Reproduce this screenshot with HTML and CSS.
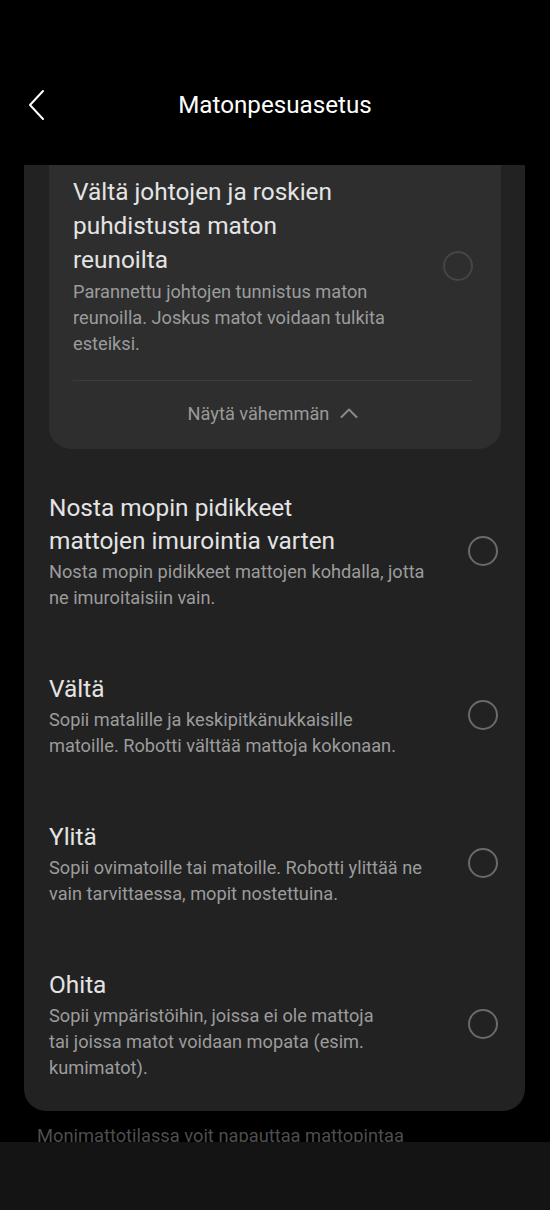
FILE: index.html
```html
<!DOCTYPE html>
<html lang="fi">
<head>
<meta charset="utf-8">
<link rel="stylesheet" href="styles.css">
</head>
<body>
<div class="screen">
  <header class="topbar">
    <button class="back" aria-label="Takaisin">
      <svg width="18" height="32" viewBox="0 0 18 32"><path d="M15 2 L2 16 L15 30" fill="none" stroke="#fff" stroke-width="2" stroke-linecap="round" stroke-linejoin="round"/></svg>
    </button>
    <h1 class="title">Matonpesuasetus</h1>
  </header>
  <main class="scroll">
    <section class="card">
      <div class="subcard">
        <div class="row">
          <div class="text">
            <div class="opt-title">Vältä johtojen ja roskien<br>puhdistusta maton<br>reunoilta</div>
            <div class="opt-desc">Parannettu johtojen tunnistus maton<br>reunoilla. Joskus matot voidaan tulkita<br>esteiksi.</div>
          </div>
          <span class="radio radio-dim"></span>
        </div>
        <div class="divider"></div>
        <div class="less">
          <span>Näytä vähemmän</span>
          <svg width="18" height="10" viewBox="0 0 18 10"><path d="M1.5 9 L9 1.5 L16.5 9" fill="none" stroke="#8a8a8a" stroke-width="2" stroke-linecap="round" stroke-linejoin="round"/></svg>
        </div>
      </div>
      <div class="list">
        <div class="row item">
          <div class="text">
            <div class="opt-title">Nosta mopin pidikkeet<br>mattojen imurointia varten</div>
            <div class="opt-desc">Nosta mopin pidikkeet mattojen kohdalla, jotta<br>ne imuroitaisiin vain.</div>
          </div>
          <span class="radio"></span>
        </div>
        <div class="row item">
          <div class="text">
            <div class="opt-title">Vältä</div>
            <div class="opt-desc">Sopii matalille ja keskipitkänukkaisille<br>matoille. Robotti välttää mattoja kokonaan.</div>
          </div>
          <span class="radio"></span>
        </div>
        <div class="row item">
          <div class="text">
            <div class="opt-title">Ylitä</div>
            <div class="opt-desc">Sopii ovimatoille tai matoille. Robotti ylittää ne<br>vain tarvittaessa, mopit nostettuina.</div>
          </div>
          <span class="radio"></span>
        </div>
        <div class="row item">
          <div class="text">
            <div class="opt-title">Ohita</div>
            <div class="opt-desc">Sopii ympäristöihin, joissa ei ole mattoja<br>tai joissa matot voidaan mopata (esim.<br>kumimatot).</div>
          </div>
          <span class="radio"></span>
        </div>
      </div>
    </section>
    <p class="note">Monimattotilassa voit napauttaa mattopintaa</p>
  </main>
  <footer class="bottombar"></footer>
</div>
</body>
</html>
```
FILE: styles.css
```css
* { box-sizing: border-box; }
html, body { margin: 0; padding: 0; background: #000; }
body { font-family: Roboto, "Noto Sans", "Liberation Sans", sans-serif; color: #e6e6e6; }
.screen { width: 550px; height: 1210px; display: flex; flex-direction: column; overflow: hidden; }

.topbar { height: 165px; flex: none; display: flex; align-items: center; padding-top: 45px; }
.back { background: none; border: 0; padding: 0; margin-left: 28px; width: 18px; height: 32px; display: flex; }
.title { margin: 0; flex: 1; text-align: center; margin-right: 46px; font-size: 24.2px; font-weight: 400; color: #fff; }

.scroll { flex: 1; overflow: hidden; }
.card { margin: 0 25px 0 24px; background: #222222; border-radius: 0 0 22px 22px; }
.subcard { margin: 0 24px 0 25px; background: #2e2e2e; border-radius: 0 0 22px 22px; padding: 10px 28px 0 24px; }

.row { display: flex; align-items: center; gap: 16px; }
.text { flex: 1; min-width: 0; white-space: nowrap; }
.opt-title { font-size: 24.4px; line-height: 34px; color: #e4e4e4; }
.opt-desc { font-size: 18.2px; line-height: 26px; color: #9c9c9c; margin-top: 2px; }
.radio { flex: none; width: 30px; height: 30px; border-radius: 50%; border: 2px solid #6a6a6a; }
.radio-dim { border-color: #454545; }

.divider { height: 1px; background: #3c3c3c; margin: 23px 0 0 0; }
.less { height: 68px; display: flex; align-items: center; justify-content: center; gap: 11px; font-size: 18.2px; color: #9a9a9a; padding-bottom: 4px; }

.list { padding: 11px 27px 0 25px; }
.item { padding: 30.5px 0; }
.item .opt-title { line-height: 33px; }

.note { margin: 12px 0 0 37px; font-size: 18.3px; line-height: 26px; color: #4e4e4e; white-space: nowrap; }
.bottombar { height: 68px; flex: none; background: #141414; }
```
